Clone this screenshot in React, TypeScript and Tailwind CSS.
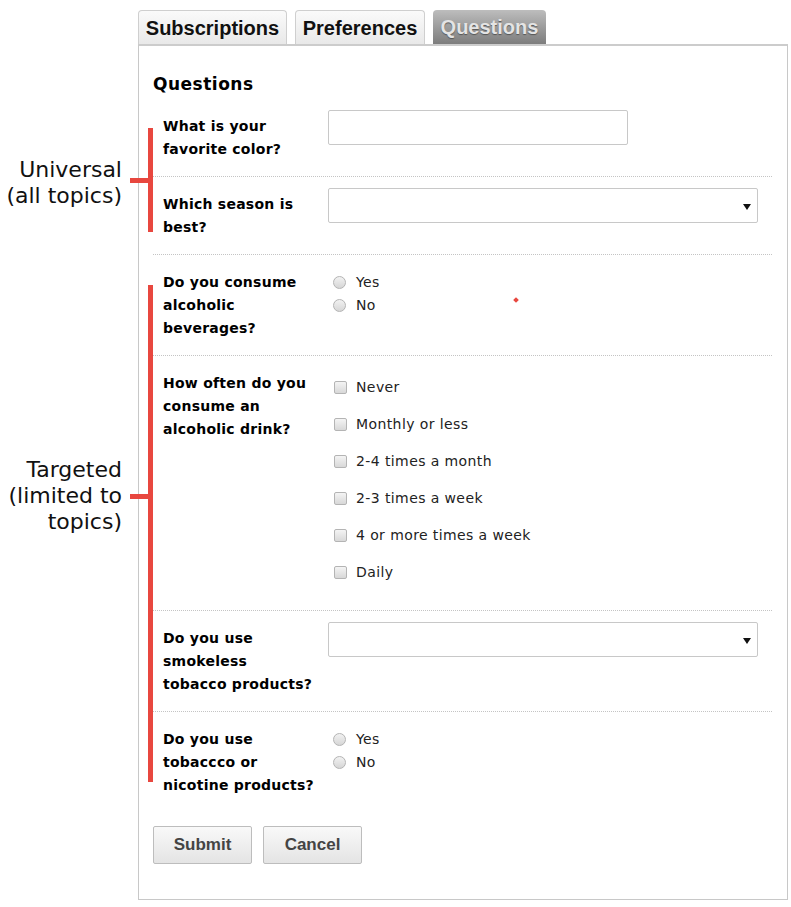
import React from "react";

const Radio = () => (
  <span className="inline-block w-[13px] h-[13px] rounded-full border border-[#b4b4b4] bg-gradient-to-b from-[#f2f2f2] to-[#d6d6d6]" />
);

const Check = () => (
  <span className="inline-block w-[13px] h-[13px] rounded-[2px] border border-[#b4b4b4] bg-gradient-to-b from-[#f4f4f4] to-[#d8d8d8]" />
);

const Arrow = () => (
  <svg width="8" height="6" viewBox="0 0 8 6" className="absolute right-[6px] top-[15px]">
    <path d="M0 0 H8 L4 6 Z" fill="#111" />
  </svg>
);

const SelectBox = () => (
  <div className="relative w-[430px] h-[35px] rounded-[2px] border border-[#c8c8c8] bg-white">
    <Arrow />
  </div>
);

const Label = ({ lines }: { lines: string[] }) => (
  <div className="w-[165px] shrink-0 pt-[5px] pr-[4px] text-[14px] tracking-[0.25px] leading-[23px] font-bold text-black whitespace-nowrap">
    {lines.map((l, i) => (
      <div key={i}>{l}</div>
    ))}
  </div>
);

const Row = ({ children, last }: { children: React.ReactNode; last?: boolean }) => (
  <div className={"flex pl-[10px] pt-[11px] pb-[15px] " + (last ? "" : "border-b border-dotted border-[#c4c4c4]")}>
    {children}
  </div>
);

const RadioGroup = () => (
  <div className="pt-[5px] text-[14px] tracking-[0.4px] leading-[23px] text-[#222]">
    {["Yes", "No"].map((o) => (
      <div key={o} className="flex items-center">
        <span className="w-[28px] pl-[5px] flex items-center"><Radio /></span>
        <span>{o}</span>
      </div>
    ))}
  </div>
);

export default function App() {
  const freq = ["Never", "Monthly or less", "2-4 times a month", "2-3 times a week", "4 or more times a week", "Daily"];
  return (
    <div className="relative w-[791px] h-[907px] bg-white overflow-hidden" style={{ fontFamily: '"DejaVu Sans", Verdana, sans-serif' }}>
      <div className="ml-[138px] w-[650px] pt-[10px]">
        <div className="flex gap-[8px] h-[34px] items-end" style={{ fontFamily: '"Liberation Sans", Arial, sans-serif' }}>
          <div className="h-[34px] w-[149px] flex items-center justify-center rounded-t-[4px] border border-b-0 border-[#cfcfcf] bg-gradient-to-b from-[#fafafa] to-[#e9e9e9] text-[20px] font-bold text-[#111]">
            Subscriptions
          </div>
          <div className="h-[34px] w-[130px] flex items-center justify-center rounded-t-[4px] border border-b-0 border-[#cfcfcf] bg-gradient-to-b from-[#fafafa] to-[#e9e9e9] text-[20px] font-bold text-[#111]">
            Preferences
          </div>
          <div
            className="h-[34px] w-[113px] flex items-center justify-center rounded-t-[4px] bg-gradient-to-b from-[#bdbdbd] to-[#7d7d7d] text-[20px] font-bold text-[#e4e4e4]"
            style={{ textShadow: "0 1px 1px #555" }}
          >
            Questions
          </div>
        </div>
        <div className="border-t-2 border-t-[#cccccc] border-x border-b border-[#c8c8c8] pl-[14px] pr-[15px] pt-[26px] pb-[35px]">
          <div className="text-[17px] tracking-[0.5px] leading-[24px] font-bold text-black mb-[3px]">Questions</div>
          <Row>
            <Label lines={["What is your", "favorite color?"]} />
            <div className="w-[300px] h-[35px] rounded-[2px] border border-[#c8c8c8] bg-white" />
          </Row>
          <Row>
            <Label lines={["Which season is", "best?"]} />
            <SelectBox />
          </Row>
          <Row>
            <Label lines={["Do you consume", "alcoholic", "beverages?"]} />
            <RadioGroup />
          </Row>
          <Row>
            <Label lines={["How often do you", "consume an", "alcoholic drink?"]} />
            <div className="pt-[9px] pb-[11px] flex flex-col gap-[14px] text-[14px] tracking-[0.4px] leading-[23px] text-[#222]">
              {freq.map((o) => (
                <div key={o} className="flex items-center">
                  <span className="w-[28px] pl-[6px] flex items-center"><Check /></span>
                  <span>{o}</span>
                </div>
              ))}
            </div>
          </Row>
          <Row>
            <Label lines={["Do you use", "smokeless", "tobacco products?"]} />
            <SelectBox />
          </Row>
          <Row last>
            <Label lines={["Do you use", "tobaccco or", "nicotine products?"]} />
            <RadioGroup />
          </Row>
          <div className="flex gap-[11px] mt-[14px]" style={{ fontFamily: '"Liberation Sans", Arial, sans-serif' }}>
            <button className="w-[99px] h-[38px] rounded-[2px] border border-[#bdbdbd] bg-gradient-to-b from-[#f9f9f9] to-[#e4e4e4] text-[17px] font-bold text-[#444]">
              Submit
            </button>
            <button className="w-[99px] h-[38px] rounded-[2px] border border-[#bdbdbd] bg-gradient-to-b from-[#f9f9f9] to-[#e4e4e4] text-[17px] font-bold text-[#444]">
              Cancel
            </button>
          </div>
        </div>
      </div>

      {/* Annotations */}
      <div className="absolute left-0 top-[157px] w-[122px] text-right text-[22px] leading-[26px] text-[#111]">
        <div>Universal</div>
        <div>(all topics)</div>
      </div>
      <div className="absolute left-[148px] top-[128px] w-[5px] h-[104px] bg-[#e8473f]" />
      <div className="absolute left-[130px] top-[178px] w-[18px] h-[5px] bg-[#e8473f]" />

      <div className="absolute left-0 top-[457px] w-[122px] text-right text-[22px] leading-[26px] text-[#111]">
        <div>Targeted</div>
        <div>(limited to</div>
        <div>topics)</div>
      </div>
      <div className="absolute left-[148px] top-[285px] w-[5px] h-[497px] bg-[#e8473f]" />
      <div className="absolute left-[130px] top-[494px] w-[18px] h-[5px] bg-[#e8473f]" />

      <div className="absolute left-[514px] top-[298px] w-[4px] h-[4px] bg-[#e8473f] rotate-45" />
    </div>
  );
}
